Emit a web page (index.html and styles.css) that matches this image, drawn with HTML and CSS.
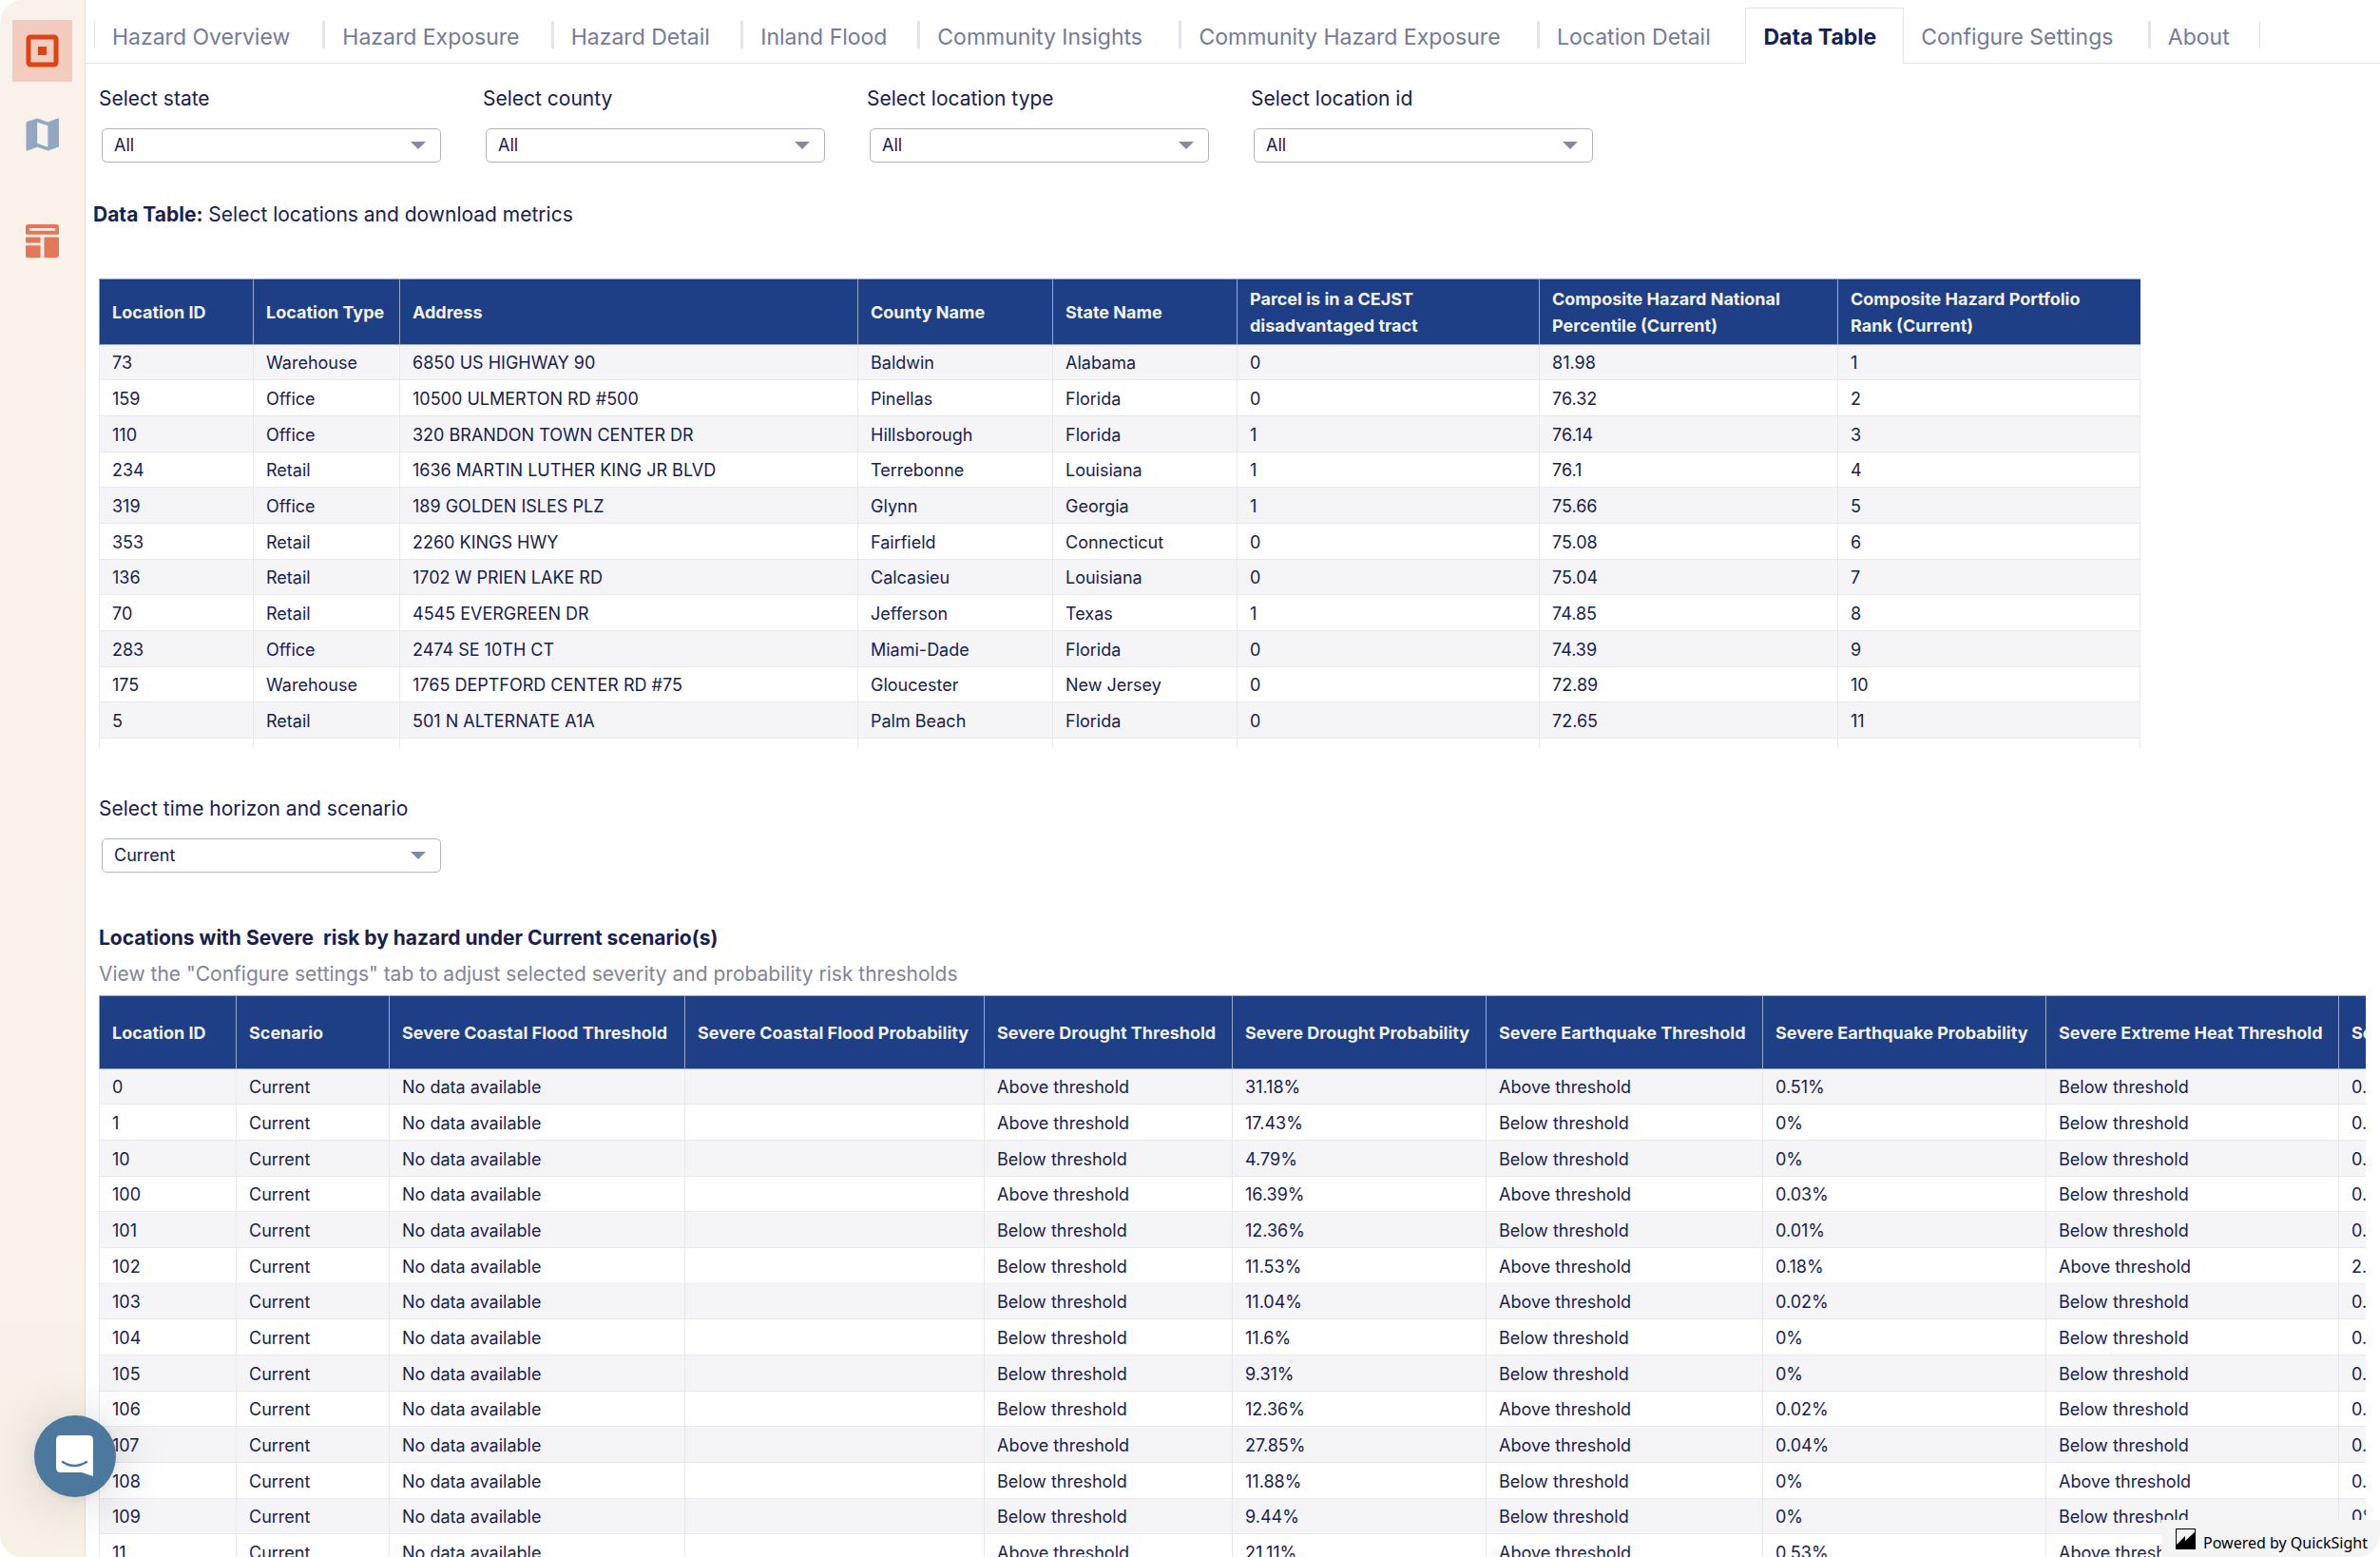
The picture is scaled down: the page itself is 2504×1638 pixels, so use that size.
FILE: index.html
```html
<!DOCTYPE html>
<html lang="en">
<head>
<meta charset="utf-8">
<title>Data Table</title>
<link rel="stylesheet" href="styles.css">
</head>
<body>
<div class="app">
  <aside class="sidebar">
    <button class="side-btn side-btn-active" type="button" aria-label="Portfolio">
      <svg width="35" height="35" viewBox="0 0 35 35"><rect x="3" y="3" width="29" height="29" rx="2" fill="none" stroke="#dc4415" stroke-width="5"/><rect x="13" y="13" width="9" height="9" fill="#dc4415"/></svg>
    </button>
    <button class="side-btn" type="button" aria-label="Map">
      <svg width="35" height="35" viewBox="0 0 36 36"><path fill="#93a7c1" fill-rule="evenodd" d="M0.500 5.500Q0.500 4.500 1.500 4.200L12.500 0.500L24 4.500L34.500 0.600Q36 0.300 36 1.500V30.500Q36 31.300 35 31.700L24 35.600L12.500 31.500L2 35.500Q0.500 36 0.500 34.500ZM12.500 4.500V27.500L24 31.500V8.500Z"/></svg>
    </button>
    <button class="side-btn side-btn-split" type="button" aria-label="Dashboards">
      <svg width="35" height="35" viewBox="0 0 36 36"><path fill="#e37759" fill-rule="evenodd" d="M3 0H33Q36 0 36 3V11H0V3Q0 0 3 0ZM4 4V7H32V4ZM0 14H16V20H0ZM0 23H16V36H2Q0 36 0 34ZM20 14H36V33Q36 36 33 36H20Z"/></svg>
    </button>
  </aside>

  <main class="main">
    <nav class="tabs">
      <a class="tab" href="#overview" data-label="Hazard Overview">Hazard Overview</a>
      <a class="tab" href="#exposure" data-label="Hazard Exposure">Hazard Exposure</a>
      <a class="tab" href="#detail" data-label="Hazard Detail">Hazard Detail</a>
      <a class="tab" href="#flood" data-label="Inland Flood">Inland Flood</a>
      <a class="tab" href="#insights" data-label="Community Insights">Community Insights</a>
      <a class="tab" href="#community" data-label="Community Hazard Exposure">Community Hazard Exposure</a>
      <a class="tab tab-plain" href="#location" data-label="Location Detail">Location Detail</a>
      <a class="tab tab-active" href="#table" data-label="Data Table" aria-current="page">Data Table</a>
      <a class="tab" href="#settings" data-label="Configure Settings">Configure Settings</a>
      <a class="tab" href="#about" data-label="About">About</a>
    </nav>

    <div class="sheet">
      <section class="filters">
        <div class="filter"><label for="state">Select state</label><div class="select-box"><select id="state"><option>All</option></select></div></div>
        <div class="filter"><label for="county">Select county</label><div class="select-box"><select id="county"><option>All</option></select></div></div>
        <div class="filter"><label for="type">Select location type</label><div class="select-box"><select id="type"><option>All</option></select></div></div>
        <div class="filter"><label for="locid">Select location id</label><div class="select-box"><select id="locid"><option>All</option></select></div></div>
      </section>

      <p class="intro"><b>Data Table:</b> Select locations and download metrics</p>

      <div class="table-view table-view-short">
        <table class="grid locations">
          <colgroup><col><col><col><col><col><col><col><col></colgroup>
          <thead><tr><th>Location ID</th><th>Location Type</th><th>Address</th><th>County Name</th><th>State Name</th><th>Parcel is in a CEJST<br>disadvantaged tract</th><th>Composite Hazard National<br>Percentile (Current)</th><th>Composite Hazard Portfolio<br>Rank (Current)</th></tr></thead>
          <tbody>
            <tr><td>73</td><td>Warehouse</td><td>6850 US HIGHWAY 90</td><td>Baldwin</td><td>Alabama</td><td>0</td><td>81.98</td><td>1</td></tr>
            <tr><td>159</td><td>Office</td><td>10500 ULMERTON RD #500</td><td>Pinellas</td><td>Florida</td><td>0</td><td>76.32</td><td>2</td></tr>
            <tr><td>110</td><td>Office</td><td>320 BRANDON TOWN CENTER DR</td><td>Hillsborough</td><td>Florida</td><td>1</td><td>76.14</td><td>3</td></tr>
            <tr><td>234</td><td>Retail</td><td>1636 MARTIN LUTHER KING JR BLVD</td><td>Terrebonne</td><td>Louisiana</td><td>1</td><td>76.1</td><td>4</td></tr>
            <tr><td>319</td><td>Office</td><td>189 GOLDEN ISLES PLZ</td><td>Glynn</td><td>Georgia</td><td>1</td><td>75.66</td><td>5</td></tr>
            <tr><td>353</td><td>Retail</td><td>2260 KINGS HWY</td><td>Fairfield</td><td>Connecticut</td><td>0</td><td>75.08</td><td>6</td></tr>
            <tr><td>136</td><td>Retail</td><td>1702 W PRIEN LAKE RD</td><td>Calcasieu</td><td>Louisiana</td><td>0</td><td>75.04</td><td>7</td></tr>
            <tr><td>70</td><td>Retail</td><td>4545 EVERGREEN DR</td><td>Jefferson</td><td>Texas</td><td>1</td><td>74.85</td><td>8</td></tr>
            <tr><td>283</td><td>Office</td><td>2474 SE 10TH CT</td><td>Miami-Dade</td><td>Florida</td><td>0</td><td>74.39</td><td>9</td></tr>
            <tr><td>175</td><td>Warehouse</td><td>1765 DEPTFORD CENTER RD #75</td><td>Gloucester</td><td>New Jersey</td><td>0</td><td>72.89</td><td>10</td></tr>
            <tr><td>5</td><td>Retail</td><td>501 N ALTERNATE A1A</td><td>Palm Beach</td><td>Florida</td><td>0</td><td>72.65</td><td>11</td></tr>
            <tr><td></td><td></td><td></td><td></td><td></td><td></td><td></td><td></td></tr>
          </tbody>
        </table>
      </div>

      <section class="filters filters-scenario">
        <div class="filter"><label for="scenario">Select time horizon and scenario</label><div class="select-box"><select id="scenario"><option>Current</option></select></div></div>
      </section>

      <h2 class="title">Locations with Severe&nbsp; risk by hazard under Current scenario(s)</h2>
      <p class="subtitle">View the "Configure settings" tab to adjust selected severity and probability risk thresholds</p>

      <div class="table-view table-view-fill">
        <table class="grid severity">
          <colgroup><col><col><col><col><col><col><col><col><col><col></colgroup>
          <thead><tr><th>Location ID</th><th>Scenario</th><th>Severe Coastal Flood Threshold</th><th>Severe Coastal Flood Probability</th><th>Severe Drought Threshold</th><th>Severe Drought Probability</th><th>Severe Earthquake Threshold</th><th>Severe Earthquake Probability</th><th>Severe Extreme Heat Threshold</th><th>Severe Extreme Heat Probability</th></tr></thead>
          <tbody>
            <tr><td>0</td><td>Current</td><td>No data available</td><td></td><td>Above threshold</td><td>31.18%</td><td>Above threshold</td><td>0.51%</td><td>Below threshold</td><td>0.05%</td></tr>
            <tr><td>1</td><td>Current</td><td>No data available</td><td></td><td>Above threshold</td><td>17.43%</td><td>Below threshold</td><td>0%</td><td>Below threshold</td><td>0.05%</td></tr>
            <tr><td>10</td><td>Current</td><td>No data available</td><td></td><td>Below threshold</td><td>4.79%</td><td>Below threshold</td><td>0%</td><td>Below threshold</td><td>0.05%</td></tr>
            <tr><td>100</td><td>Current</td><td>No data available</td><td></td><td>Above threshold</td><td>16.39%</td><td>Above threshold</td><td>0.03%</td><td>Below threshold</td><td>0.05%</td></tr>
            <tr><td>101</td><td>Current</td><td>No data available</td><td></td><td>Below threshold</td><td>12.36%</td><td>Below threshold</td><td>0.01%</td><td>Below threshold</td><td>0.05%</td></tr>
            <tr><td>102</td><td>Current</td><td>No data available</td><td></td><td>Below threshold</td><td>11.53%</td><td>Above threshold</td><td>0.18%</td><td>Above threshold</td><td>2.05%</td></tr>
            <tr><td>103</td><td>Current</td><td>No data available</td><td></td><td>Below threshold</td><td>11.04%</td><td>Above threshold</td><td>0.02%</td><td>Below threshold</td><td>0.05%</td></tr>
            <tr><td>104</td><td>Current</td><td>No data available</td><td></td><td>Below threshold</td><td>11.6%</td><td>Below threshold</td><td>0%</td><td>Below threshold</td><td>0.05%</td></tr>
            <tr><td>105</td><td>Current</td><td>No data available</td><td></td><td>Below threshold</td><td>9.31%</td><td>Below threshold</td><td>0%</td><td>Below threshold</td><td>0.05%</td></tr>
            <tr><td>106</td><td>Current</td><td>No data available</td><td></td><td>Below threshold</td><td>12.36%</td><td>Above threshold</td><td>0.02%</td><td>Below threshold</td><td>0.05%</td></tr>
            <tr><td>107</td><td>Current</td><td>No data available</td><td></td><td>Above threshold</td><td>27.85%</td><td>Above threshold</td><td>0.04%</td><td>Below threshold</td><td>0.05%</td></tr>
            <tr><td>108</td><td>Current</td><td>No data available</td><td></td><td>Below threshold</td><td>11.88%</td><td>Below threshold</td><td>0%</td><td>Above threshold</td><td>0.05%</td></tr>
            <tr><td>109</td><td>Current</td><td>No data available</td><td></td><td>Below threshold</td><td>9.44%</td><td>Below threshold</td><td>0%</td><td>Below threshold</td><td>0%</td></tr>
            <tr><td>11</td><td>Current</td><td>No data available</td><td></td><td>Above threshold</td><td>21.11%</td><td>Above threshold</td><td>0.53%</td><td>Above threshold</td><td></td></tr>
          </tbody>
        </table>
      </div>
    </div>
  </main>

  <button class="chat" type="button" aria-label="Open chat">
    <svg width="40" height="44" viewBox="0 0 40 44"><path fill="#fff" d="M5 0H34Q39 0 39 5V43L27 39H5Q0 39 0 34V5Q0 0 5 0Z"/><path fill="none" stroke="#4d789d" stroke-width="2.500" stroke-linecap="round" d="M7 28Q19 36 32 28"/></svg>
  </button>
  <a class="powered" href="#quicksight">
    <svg width="21" height="22" viewBox="0 0 21 22"><rect x="0.500" y="0.500" width="20" height="21" fill="#f4f4f4" stroke="#000"/><path d="M1 17L10 8V13L21 3V22H0V18Z"/></svg>
    Powered by QuickSight
  </a>
</div>
</body>
</html>
```
FILE: styles.css
```css
* { box-sizing: border-box; }

body {
  margin: 0;
  background: #fff;
  color: #17214f;
  font-family: Inter, "Liberation Sans", sans-serif;
  font-size: 21px;
  line-height: 28px;
}

p, h2 { margin: 0; font-size: 21px; }

.app {
  position: relative;
  display: flex;
  height: 100vh;
  overflow: hidden;
}

/* Sidebar */
.sidebar {
  display: flex;
  flex: none;
  flex-direction: column;
  gap: 23px;
  width: 90px;
  padding: 21px 13px;
  border-right: 1px solid #dcdfe6;
  border-radius: 24px 0 0 24px;
  background: linear-gradient(#f9f2ea, #faf1ec 50%, #f8f1e8);
}

.side-btn {
  display: flex;
  align-items: center;
  justify-content: center;
  width: 63px;
  height: 65px;
  padding: 0;
  border: 0;
  background: none;
}

.side-btn-active { background: #f3cbbf; }
.side-btn-split { margin-top: 24px; }

.main {
  display: flex;
  flex: 1;
  flex-direction: column;
  min-width: 0;
}

/* Tabs */
.tabs {
  display: flex;
  flex: none;
  height: 67px;
  padding-left: 9px;
  box-shadow: inset 0 -1px #e3e4e9;
}

.tab {
  height: 29px;
  margin-top: 22px;
  padding: 5px 28px 0 18px;
  border-right: 3px solid #e3e4e9;
  color: #747b99;
  font-size: 23px;
  line-height: 25px;
  text-decoration: none;
  white-space: nowrap;
}

/* reserves the bold width so that tabs keep their size when selected */
.tab::after {
  display: block;
  height: 0;
  overflow: hidden;
  visibility: hidden;
  content: attr(data-label);
  font-weight: 700;
}

.tab:first-child { border-left: 1px solid #e3e4e9; }
.tab:last-child { border-right-width: 1px; }
.tab-plain { border-right-color: transparent; }

.tab-active {
  height: 59px;
  margin-top: 8px;
  padding-top: 18px;
  border: 1px solid #e3e4e9;
  border-bottom: 0;
  background: #fff;
  color: #17214f;
  font-weight: 700;
}

/* Sheet */
.sheet {
  display: flex;
  flex: 1;
  flex-direction: column;
  min-height: 0;
  padding: 23px 15px 0 14px;
}

.filters {
  display: grid;
  grid-template-columns: repeat(4, 360px);
  gap: 44px;
}

.filters-scenario { margin-top: 50px; }

.filter {
  display: flex;
  flex-direction: column;
  gap: 17px;
}

.select-box {
  display: grid;
  align-items: center;
  margin-left: 3px;
}

.select-box > select,
.select-box::after { grid-area: 1 / 1; }

.select-box::after {
  justify-self: end;
  margin-right: 16px;
  border: 8px solid transparent;
  border-top-color: #838aa5;
  border-bottom: 0;
  content: "";
  pointer-events: none;
}

select {
  width: 100%;
  height: 36px;
  padding: 0 12px;
  border: 1px solid #b0b3c5;
  border-radius: 5px;
  appearance: none;
  background: #fff;
  color: inherit;
  font: inherit;
  font-size: 18px;
}

.intro {
  margin: 41px 0 53px -6px;
}

.title {
  margin-top: 55px;
  font-weight: 700;
}

.subtitle {
  margin: 10px 0 8px;
  color: #7f849c;
}

/* Tables */
.table-view { overflow: hidden; }
.table-view-short { flex: none; height: 494px; }
.table-view-fill { flex: 1; min-height: 0; }

.grid {
  border-spacing: 0;
  table-layout: fixed;
  font-size: 18px;
  text-align: left;
}

.grid th,
.grid td {
  padding: 2px 0 0 13px;
  border-left: 1px solid #e8e9ee;
  white-space: nowrap;
}

.grid th {
  height: 70px;
  padding-top: 1px;
  border: solid #9aa9cb;
  border-width: 1px 0 1px 1px;
  background: #1e3f85;
  color: #f1f2f4;
  font-weight: 700;
}

.grid td {
  height: 38px;
  border-bottom: 1px solid #e8e9ee;
  line-height: 24px;
}

.grid tr:nth-child(3n + 1) td { height: 37px; }
.grid tbody tr:nth-child(odd) { background: #f5f5f8; }
.grid td:last-child { border-right: 1px solid #e8e9ee; }

.locations { width: 2148px; }
.locations col:nth-child(1) { width: 162px; }
.locations col:nth-child(2) { width: 154px; }
.locations col:nth-child(3) { width: 482px; }
.locations col:nth-child(4) { width: 205px; }
.locations col:nth-child(5) { width: 194px; }
.locations col:nth-child(6) { width: 318px; }
.locations col:nth-child(7) { width: 314px; }
.locations col:nth-child(8) { width: 319px; }

.severity { width: 2656px; }
.severity th { height: 78px; }
.severity col:nth-child(1) { width: 144px; }
.severity col:nth-child(2) { width: 161px; }
.severity col:nth-child(3) { width: 311px; }
.severity col:nth-child(4) { width: 315px; }
.severity col:nth-child(5) { width: 261px; }
.severity col:nth-child(6) { width: 267px; }
.severity col:nth-child(7) { width: 291px; }
.severity col:nth-child(8) { width: 298px; }
.severity col:nth-child(9) { width: 308px; }
.severity col:nth-child(10) { width: 300px; }

/* Overlays */
.chat {
  position: absolute;
  bottom: 63px;
  left: 36px;
  display: flex;
  align-items: center;
  justify-content: center;
  width: 86px;
  height: 86px;
  padding: 0;
  border: 0;
  border-radius: 50%;
  background: #4d789d;
  box-shadow: 0 2px 10px rgba(0, 0, 0, 0.060), 0 4px 60px rgba(0, 0, 0, 0.160);
}

.powered {
  position: absolute;
  right: 0;
  bottom: 0;
  display: flex;
  align-items: center;
  gap: 8px;
  height: 39px;
  padding: 8px 13px 0 15px;
  border-bottom-right-radius: 24px;
  background: #f4f4f4;
  color: #000;
  font-family: "Noto Sans", sans-serif;
  font-size: 16px;
  line-height: 24px;
  text-decoration: none;
}

.powered svg { margin-bottom: 8px; }
```
